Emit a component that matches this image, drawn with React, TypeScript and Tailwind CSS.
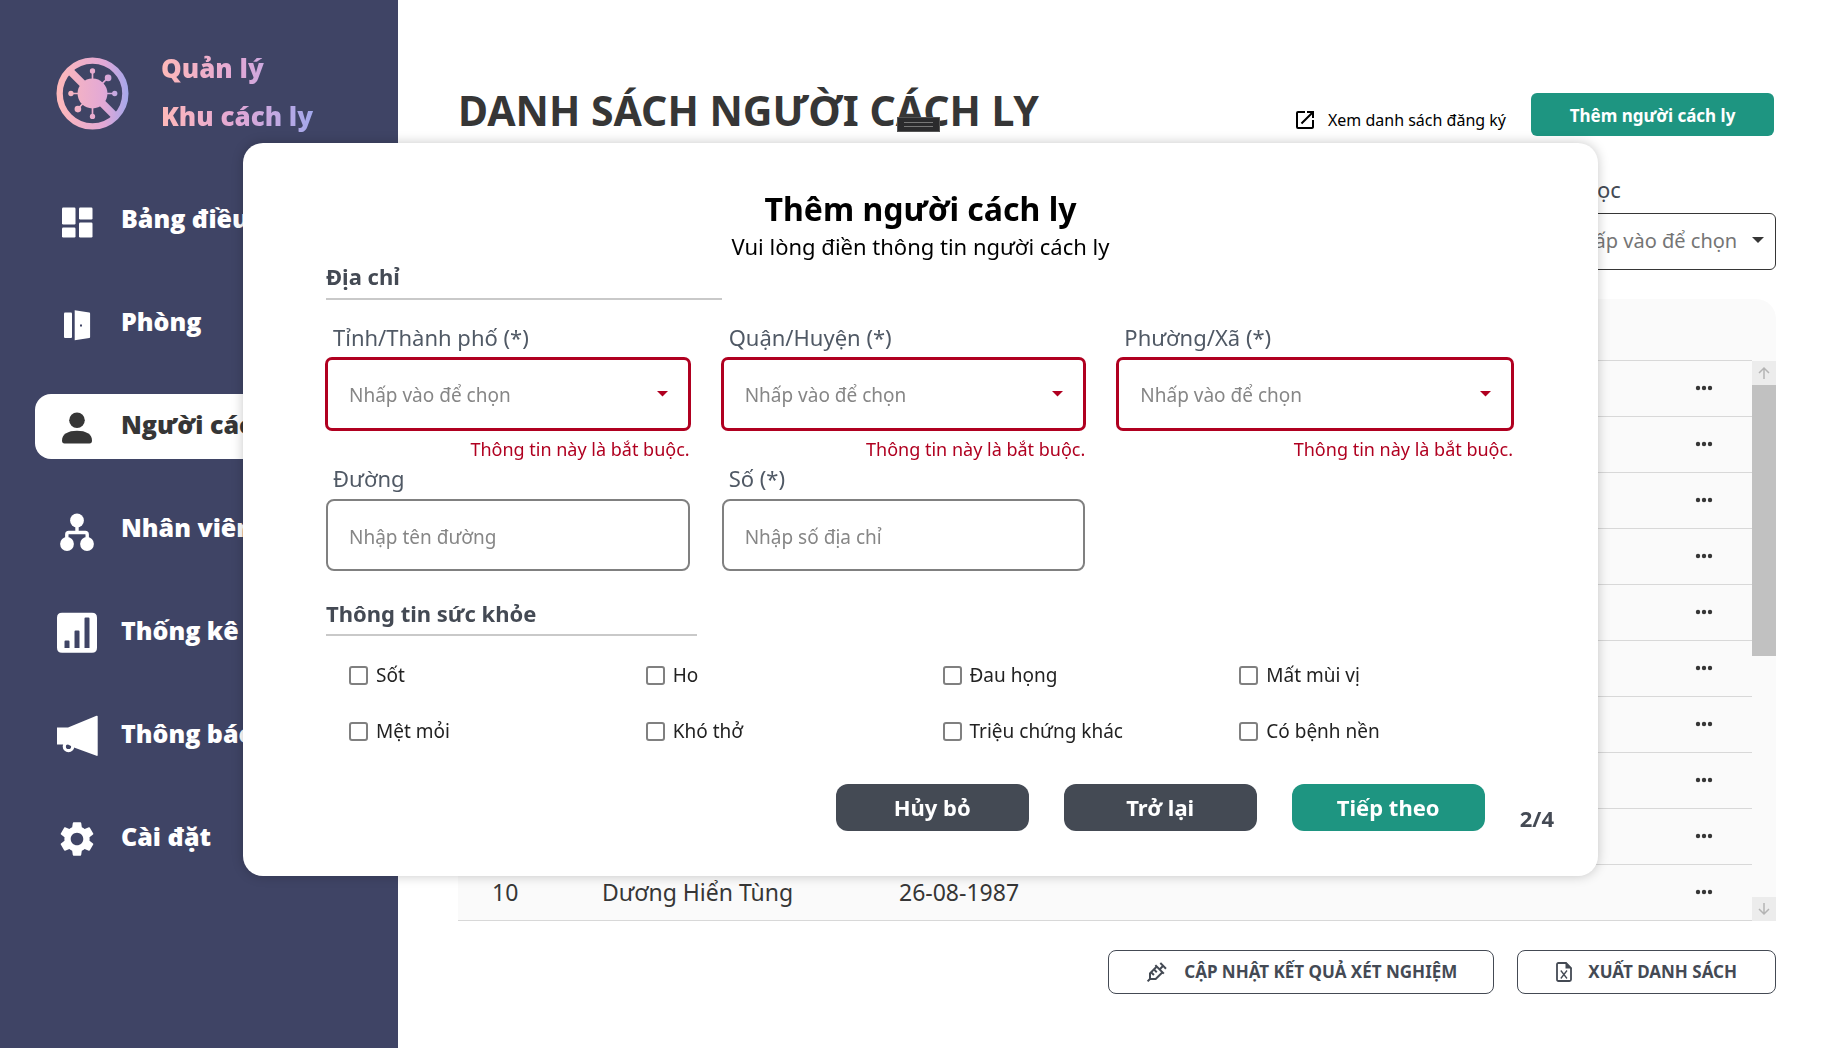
import type { ReactNode } from "react";
import { MdOpenInNew, MdSettings } from "react-icons/md";
import { RiSyringeLine } from "react-icons/ri";

function Logo() {
  return (
    <svg viewBox="18 18 220 220" className="size-[73px] shrink-0" aria-hidden="true">
      <defs>
        <linearGradient id="brand" gradientUnits="userSpaceOnUse" x1="18" y1="0" x2="238" y2="0">
          <stop offset="0" stopColor="#ffb9b9" />
          <stop offset="0.66" stopColor="#e2a8d6" />
          <stop offset="1" stopColor="#a2a8ec" />
        </linearGradient>
      </defs>
      <g fill="none" stroke="url(#brand)">
        <circle cx="128" cy="128" r="99" strokeWidth="19" />
        <path d="M56 56 200 200" strokeWidth="23" />
        <path d="M128 60v136.01M64 128h132v.01M84 174 174 81" strokeWidth="5" />
      </g>
      <g fill="url(#brand)">
        <circle cx="128" cy="128" r="45" />
        <circle cx="128" cy="60" r="8" />
        <circle cx="128" cy="197" r="8" />
        <circle cx="63" cy="128" r="8" />
        <circle cx="195" cy="128" r="8" />
        <circle cx="175" cy="81" r="10" />
        <circle cx="84" cy="175" r="10" />
      </g>
    </svg>
  );
}

function NavIcon({ children }: { children: ReactNode }) {
  return (
    <svg viewBox="0 0 42 42" className="size-[42px] shrink-0" fill="currentColor" aria-hidden="true">
      {children}
    </svg>
  );
}

const navItems: { label: string; active?: boolean; icon: ReactNode }[] = [
  {
    label: "Bảng điều khiển",
    icon: (
      <NavIcon>
        <rect x="6" y="7.5" width="13.5" height="17" rx="1.2" />
        <rect x="6" y="27.5" width="13.5" height="10" rx="1.2" />
        <rect x="23" y="7.5" width="13.5" height="12" rx="1.2" />
        <rect x="23" y="22.5" width="13.5" height="15" rx="1.2" />
      </NavIcon>
    ),
  },
  {
    label: "Phòng",
    icon: (
      <NavIcon>
        <rect x="8" y="9.5" width="8" height="25.5" rx="1" />
        <path
          fillRule="evenodd"
          d="M18.7 7.3 33.3 9.5q.8.2.8 1V34q0 .9-.8 1L18.7 37.3zM24 21.5v2h2v-2z"
        />
      </NavIcon>
    ),
  },
  {
    label: "Người cách ly",
    active: true,
    icon: (
      <NavIcon>
        <circle cx="21" cy="14.3" r="7.8" />
        <path d="M6 34.5C6 28 12 24.7 21 24.7S36 28 36 34.5q0 2.9-2.5 2.9h-25Q6 37.4 6 34.5z" />
      </NavIcon>
    ),
  },
  {
    label: "Nhân viên",
    icon: (
      <NavIcon>
        <circle cx="21" cy="11.5" r="6.9" />
        <circle cx="11" cy="35" r="6.9" />
        <circle cx="31" cy="35" r="6.9" />
        <path d="M21 17v6M10.8 30v-4.5q0-2 2-2h16.4q2 0 2 2V30" fill="none" stroke="currentColor" strokeWidth="3.4" />
      </NavIcon>
    ),
  },
  {
    label: "Thống kê",
    icon: (
      <NavIcon>
        <path
          fillRule="evenodd"
          d="M6 .8h30q5 0 5 5v30q0 5-5 5H6q-5 0-5-5v-30q0-5 5-5zM9.5 28.5q-1 0-1 1v6.5h5v-6.5q0-1-1-1zM19.5 18.5q-1 0-1 1V36h5V19.5q0-1-1-1zM29.5 5.5q-1 0-1 1V36h5V6.5q0-1-1-1z"
        />
      </NavIcon>
    ),
  },
  {
    label: "Thông báo",
    icon: (
      <NavIcon>
        <path d="M1 12.500h11L40.500.8q1.200-.4 1.200.8V40q0 1.200-1.200.8L18 32.500 12 29.500H1z" />
        <circle cx="12.5" cy="31.5" r="4.2" fill="none" stroke="currentColor" strokeWidth="3.2" />
      </NavIcon>
    ),
  },
  { label: "Cài đặt", icon: <MdSettings className="size-[42px] shrink-0" aria-hidden="true" /> },
];

function Sidebar() {
  return (
    <aside className="flex w-[398px] shrink-0 flex-col bg-[#3f4465] font-['Open_Sans',sans-serif] font-extrabold text-white">
      <div className="flex items-center pt-11 pl-14">
        <Logo />
        <p className="mb-0.5 ml-8 bg-linear-to-r from-[#ffb9b9] via-[#e2a8d6] to-[#a2a8ec] bg-clip-text text-[26px] leading-[48px] text-transparent">
          Quản lý
          <br />
          Khu cách ly
        </p>
      </div>
      <nav className="mt-[46px] flex flex-col gap-[38px] pl-[35px]">
        {navItems.map(({ label, active, icon }) => (
          <a
            key={label}
            href="#"
            aria-current={active ? "page" : undefined}
            className={`flex h-[65px] items-center gap-[23px] rounded-l-2xl pl-[21px] text-[25px] whitespace-nowrap ${
              active ? "bg-white text-[#363636]" : ""
            }`}
          >
            {icon}
            <span className="pb-[3px]">{label}</span>
          </a>
        ))}
      </nav>
    </aside>
  );
}

type Person = { order?: number; name?: string; born?: string };

const people: Person[] = [
  ...Array.from({ length: 9 }, (): Person => ({})),
  { order: 10, name: "Dương Hiển Tùng", born: "26-08-1987" },
];

function PeopleTable() {
  return (
    <div className="mt-[29px] flex overflow-hidden rounded-t-[20px] bg-[#fafafa]">
      <table className="flex-1 table-fixed border-collapse text-[23px] text-[#363636]">
        <thead>
          <tr className="h-[61px] border-b border-[#d8d8d8] text-left">
            <th className="w-[144px]" aria-label="STT" />
            <th className="w-[297px]" aria-label="Họ và tên" />
            <th aria-label="Ngày sinh" />
            <th className="w-24" aria-label="Thao tác" />
          </tr>
        </thead>
        <tbody>
          {people.map(({ order, name, born }, index) => (
            <tr key={index} className="h-14 border-b border-[#d8d8d8]">
              <td className="pl-[34px]">{order}</td>
              <td>{name}</td>
              <td>{born}</td>
              <td>
                <button type="button" aria-label={`Tùy chọn ${index + 1}`} className="flex h-8 w-24 items-center justify-center">
                  <svg viewBox="0 0 18 6" className="w-[18px]" fill="currentColor" aria-hidden="true">
                    <circle cx="3" cy="3" r="2.2" />
                    <circle cx="9" cy="3" r="2.2" />
                    <circle cx="15" cy="3" r="2.2" />
                  </svg>
                </button>
              </td>
            </tr>
          ))}
        </tbody>
      </table>
      <div className="mt-[62px] flex w-6 flex-col" aria-hidden="true">
        <ScrollArrow path="M6 13V2M1 7l5-5 5 5" />
        <div className="h-[271px] bg-[#c1c1c1]" />
        <div className="flex-1" />
        <ScrollArrow path="M6 1v11M1 7l5 5 5-5" />
      </div>
    </div>
  );
}

function ScrollArrow({ path }: { path: string }) {
  return (
    <div className="flex h-6 items-center justify-center bg-[#ececec]">
      <svg viewBox="0 0 12 14" className="w-3" fill="none" stroke="#b4b4b4" strokeWidth="1.5">
        <path d={path} />
      </svg>
    </div>
  );
}

function Caret({ className }: { className: string }) {
  return (
    <svg
      viewBox="0 0 12 6"
      className={`pointer-events-none absolute inset-y-0 my-auto ${className}`}
      fill="currentColor"
      aria-hidden="true"
    >
      <path d="M0 0h12L6 6z" />
    </svg>
  );
}

const outlineButton =
  "flex h-11 items-center rounded-lg border border-[#444a54] text-[17px] font-bold text-[#444a54]";

function Main() {
  return (
    <main className="flex min-w-0 flex-1 flex-col pr-[65px] pl-[60px]">
      <header className="flex items-center pt-[84px]">
        <h1 className="pb-[3px] text-[41px] leading-[53px] font-bold whitespace-nowrap text-[#363636]">
          DANH SÁCH NGƯỜI CÁCH LY
        </h1>
        <a href="#" className="mt-4 ml-auto flex items-center gap-[11px] text-base whitespace-nowrap text-black">
          <MdOpenInNew className="size-6" aria-hidden="true" />
          Xem danh sách đăng ký
        </a>
        <button type="button" className="mt-1 mr-0.5 ml-[25px] h-[43px] w-[243px] rounded-md bg-[#1e9581] pt-[3px] text-[17px] font-bold text-white">
          Thêm người cách ly
        </button>
      </header>
      <div className="mt-[33px] w-[230px] self-end">
        <label htmlFor="filter" className="block pl-3 text-[22px] leading-8 text-[#444a54]">
          Bộ lọc
        </label>
        <div className="relative mt-2">
          <select id="filter" className="h-[57px] w-full appearance-none rounded-md border border-[#363636] bg-white pb-0.5 pl-5 text-xl text-[#757575]">
            <option>Nhấp vào để chọn</option>
          </select>
          <Caret className="right-3 w-3 pb-[3px] text-[#363636]" />
        </div>
      </div>
      <PeopleTable />
      <div className="mt-[29px] mb-[54px] flex justify-end gap-[23px]">
        <button type="button" className={`${outlineButton} gap-[15px] px-9`}>
          <RiSyringeLine className="size-6" aria-hidden="true" />
          CẬP NHẬT KẾT QUẢ XÉT NGHIỆM
        </button>
        <button type="button" className={`${outlineButton} gap-4 px-[38px]`}>
          <svg viewBox="0 0 16 20" className="w-4" aria-hidden="true">
            <path d="M2.500 1H10l5 5v11.500q0 1.500-1.500 1.500h-11Q1 19 1 17.500v-15Q1 1 2.500 1z" fill="none" stroke="currentColor" strokeWidth="1.8" />
            <path d="M9.500 0v6.500H16z" fill="currentColor" />
            <path d="M4.800 8.500 11 16.500M11 8.500 4.800 16.500" stroke="currentColor" strokeWidth="1.3" />
          </svg>
          XUẤT DANH SÁCH
        </button>
      </div>
    </main>
  );
}

const fieldLabel = "block pl-[7px] text-[22px] leading-[30px] text-[#505965]";

function SelectField({ id, label, last }: { id: string; label: string; last?: boolean }) {
  return (
    <div className={last ? "" : "pr-8"}>
      <label htmlFor={id} className={fieldLabel}>
        {label}
      </label>
      <div className="relative mt-[6px]">
        <select
          id={id}
          aria-invalid="true"
          aria-describedby={`${id}-error`}
          className="h-[72px] w-full appearance-none rounded-md border-2 border-[#b00020] bg-white pt-[3px] pl-[21px] text-[19px] text-[#868686] ring-1 ring-[#b00020]"
        >
          <option>Nhấp vào để chọn</option>
        </select>
        <Caret className="right-[22px] w-[11px] text-[#b00020]" />
      </div>
      <p id={`${id}-error`} className="mt-[7px] text-right text-lg leading-6 text-[#b00020]">
        Thông tin này là bắt buộc.
      </p>
    </div>
  );
}

function TextField({ id, label, placeholder }: { id: string; label: string; placeholder: string }) {
  return (
    <div className="pr-8">
      <label htmlFor={id} className={fieldLabel}>
        {label}
      </label>
      <input
        id={id}
        type="text"
        placeholder={placeholder}
        className="mt-[6px] h-[72px] w-full rounded-lg border-2 border-[#808080] bg-white pt-[3px] pl-[21px] text-[19px] placeholder:text-[#868686]"
      />
    </div>
  );
}

const symptoms = ["Sốt", "Ho", "Đau họng", "Mất mùi vị", "Mệt mỏi", "Khó thở", "Triệu chứng khác", "Có bệnh nền"];

const sectionTitle = "border-b-2 border-[#c9c9c9] text-[22px] leading-[30px] font-bold text-[#444a54]";
const dialogButton = "h-[47px] w-[193px] rounded-xl text-[22px] font-bold text-white";

function AddPersonDialog() {
  return (
    <div className="fixed inset-0 flex items-center justify-center pb-[29px]">
      <form
        role="dialog"
        aria-labelledby="dialog-title"
        className="w-[1355px] max-w-full rounded-[20px] bg-white pt-[46px] pb-[45px] pl-[83px] shadow-[0_0_12px_rgba(0,0,0,0.22)]"
      >
        <div className="pr-[83px] text-center text-black">
          <h2 id="dialog-title" className="text-[32px] leading-10 font-bold">
            Thêm người cách ly
          </h2>
          <p className="mt-0.5 text-[22px] leading-[30px]">Vui lòng điền thông tin người cách ly</p>
        </div>
        <div className="pr-[85px]">
          <h3 className={`${sectionTitle} w-1/3 pb-[7px]`}>Địa chỉ</h3>
          <div className="mt-[22px] grid grid-cols-3 gap-y-0.5">
            <SelectField id="province" label="Tỉnh/Thành phố (*)" />
            <SelectField id="district" label="Quận/Huyện (*)" />
            <SelectField id="ward" label="Phường/Xã (*)" last />
            <TextField id="street" label="Đường" placeholder="Nhập tên đường" />
            <TextField id="number" label="Số (*)" placeholder="Nhập số địa chỉ" />
          </div>
          <h3 className={`${sectionTitle} mt-[27px] w-[371px] pb-[6px]`}>Thông tin sức khỏe</h3>
          <div className="mt-6 grid grid-cols-4 gap-y-[26px] text-[19px] leading-[30px] text-[#222]">
            {symptoms.map((name) => (
              <label key={name} className="flex items-center gap-2 pl-[23px]">
                <input type="checkbox" className="size-[19px] appearance-none rounded-[3px] border-2 border-[#808080] bg-white checked:bg-[#1e9581]" />
                {name}
              </label>
            ))}
          </div>
        </div>
        <div className="mt-[38px] flex items-start justify-end gap-[35px] pr-11">
          <button type="button" className={`${dialogButton} bg-[#444a54]`}>
            Hủy bỏ
          </button>
          <button type="button" className={`${dialogButton} bg-[#444a54]`}>
            Trở lại
          </button>
          <button type="submit" className={`${dialogButton} bg-[#1e9581]`}>
            Tiếp theo
          </button>
          <span className="self-end text-[22px] leading-[26px] font-bold text-[#444a54]">2/4</span>
        </div>
      </form>
    </div>
  );
}

export default function App() {
  return (
    <div className="relative flex min-h-screen bg-white font-['Noto_Sans',sans-serif]">
      <Sidebar />
      <Main />
      <div className="absolute top-[117px] left-[897px] flex h-[15px] w-[43px] flex-col justify-center gap-[3px] border border-[#555] bg-[#2b2b2d] px-[6px]" aria-hidden="true">
        <div className="h-px bg-[#777]" />
        <div className="h-px bg-[#777]" />
      </div>
      <AddPersonDialog />
    </div>
  );
}
